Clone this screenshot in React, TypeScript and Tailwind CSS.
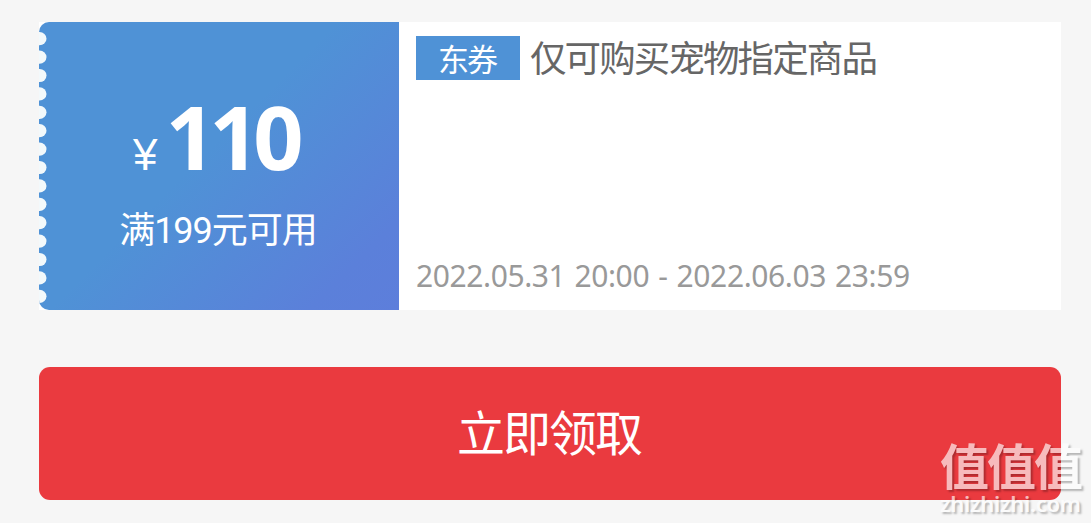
import React from 'react';

interface Coupon {
  amount: string;
  condition: string;
  tag: string;
  title: string;
  period: string;
}

const coupon: Coupon = {
  amount: '110',
  condition: '满199元可用',
  tag: '东券',
  title: '仅可购买宠物指定商品',
  period: '2022.05.31 20:00 - 2022.06.03 23:59',
};

// Perforated left edge of the ticket
const Perforation: React.FC = () => (
  <svg className="absolute left-0 top-0" width="8" height="288" viewBox="0 0 8 288">
    {Array.from({ length: 15 }, (_, i) => (
      <ellipse key={i} cx="0.5" cy={16.7 + i * 18.4} rx="7" ry="6.6" fill="#f3f9fb" />
    ))}
  </svg>
);

const CouponCard: React.FC<{ coupon: Coupon }> = ({ coupon }) => (
  <div className="flex h-72 w-[1022px] bg-white">
    <div className="relative flex w-[360px] shrink-0 flex-col items-center overflow-hidden rounded-l-[10px] bg-[linear-gradient(135deg,#4f92d6_0%,#4f92d6_46%,#5b80da_86%,#5d7edb_100%)] text-white">
      <Perforation />
      <div className="mt-[64px] flex h-[100px] items-baseline whitespace-nowrap pr-[8px] leading-[100px]">
        <span className="mr-[8px] font-['Liberation_Sans'] text-[44px]">¥</span>
        <span className="font-['Open_Sans'] text-[88px] font-bold tracking-[-6.5px]">{coupon.amount}</span>
      </div>
      <div className="mt-[21px] whitespace-nowrap pr-0.5 font-['Roboto','Noto_Sans_CJK_SC',sans-serif] text-[36px] leading-[48px] tracking-[-1px]">
        {coupon.condition}
      </div>
    </div>
    <div className="flex flex-1 flex-col justify-between pb-[10px] pl-[17px] pt-[14px]">
      <div className="flex h-11 items-center">
        <span className="flex h-11 w-[104px] items-center justify-center bg-[#4f92d6] pr-0.5 font-['Noto_Sans_CJK_SC',sans-serif] text-[31px] leading-[44px] tracking-[-2px] text-white">
          {coupon.tag}
        </span>
        <span className="ml-[10px] whitespace-nowrap pb-[3px] font-['Noto_Sans_CJK_SC',sans-serif] text-[36.5px] leading-[44px] tracking-[-1.9px] text-[#666]">
          {coupon.title}
        </span>
      </div>
      <div className="whitespace-nowrap font-['Noto_Sans',sans-serif] text-[30px] leading-[48px] tracking-[-0.4px] text-[#999] [word-spacing:1.7px]">
        {coupon.period}
      </div>
    </div>
  </div>
);

const Watermark: React.FC = () => (
  <div className="absolute left-[940px] top-[439px] flex w-[150px] flex-col text-white opacity-65 [text-shadow:2px_2px_2px_rgba(0,0,0,0.4)]">
    <span className="whitespace-nowrap font-['Noto_Sans_CJK_SC',sans-serif] text-[49px] font-bold leading-[50px] tracking-[-2px]">
      值值值
    </span>
    <span className="whitespace-nowrap font-['Noto_Sans',sans-serif] text-[22px] font-semibold leading-[29px] tracking-[-0.3px]">
      zhizhizhi.com
    </span>
  </div>
);

export default function App() {
  return (
    <div className="relative h-[523px] w-[1091px] overflow-hidden bg-[#f6f6f6] pl-[39px] pt-[22px]">
      <CouponCard coupon={coupon} />
      <button className="mt-[57px] flex h-[133px] w-[1022px] items-center justify-center rounded-[11px] bg-[#ea3a3f] pb-[7px] pr-0.5 font-['Noto_Sans_CJK_SC',sans-serif] text-[48px] tracking-[-2px] text-white">
        立即领取
      </button>
      <Watermark />
    </div>
  );
}
